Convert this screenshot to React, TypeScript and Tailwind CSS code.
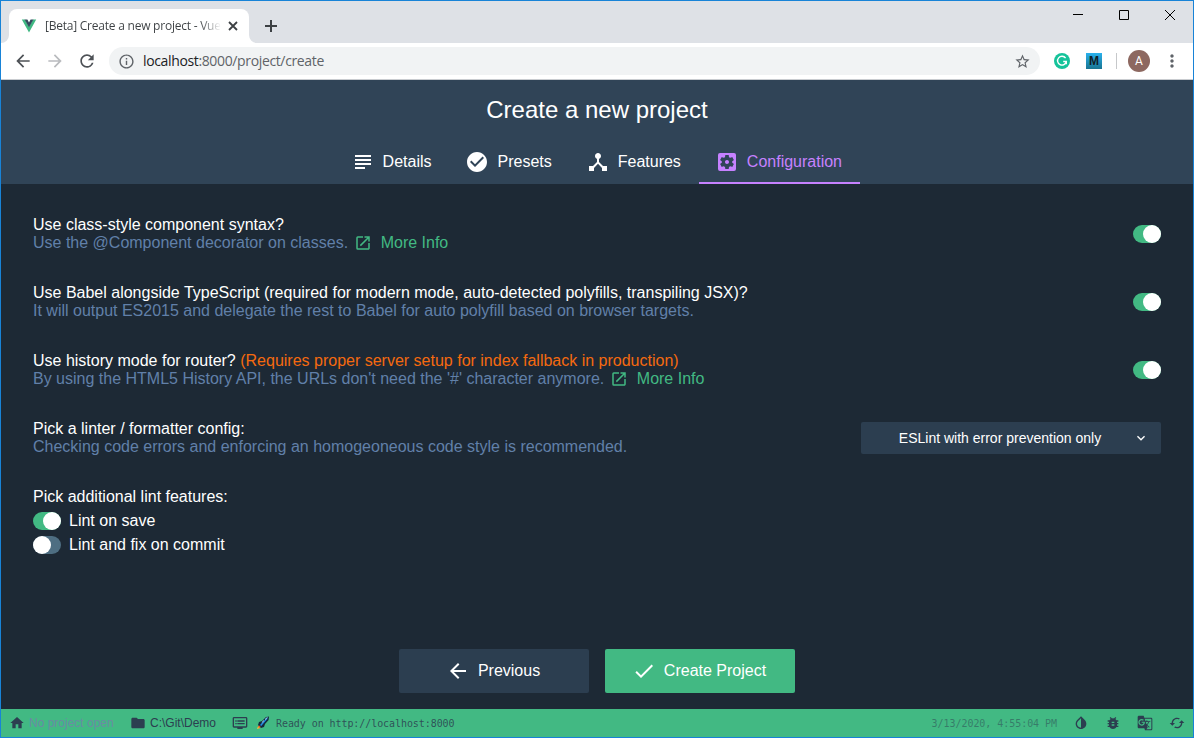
import type { ReactNode } from "react";
import {
  MdArrowBack,
  MdArrowForward,
  MdBugReport,
  MdCached,
  MdCheckCircle,
  MdDeviceHub,
  MdDone,
  MdDvr,
  MdFolder,
  MdGTranslate,
  MdHome,
  MdInfoOutline,
  MdInvertColors,
  MdKeyboardArrowDown,
  MdMoreVert,
  MdOpenInNew,
  MdRefresh,
  MdSettingsApplications,
  MdStarBorder,
  MdSubject,
} from "react-icons/md";

function VueLogo() {
  return (
    <svg className="h-4 w-4 shrink-0" viewBox="0 0 16 16">
      <path d="M0.8 1.6H4l4 6.9 4-6.9h3.2L8 14.4z" fill="#41b883" />
      <path d="M3.6 1.6h2.8L8 4.4l1.6-2.8h2.8L8 9.3z" fill="#35495e" />
    </svg>
  );
}

function TabStrip() {
  return (
    <div className="flex h-[42px] items-end bg-[#dee1e6] pl-[8px]">
      <div className="relative flex h-[34px] w-[240px] items-center rounded-t-[8px] bg-white pl-[12px]">
        <svg className="absolute -left-[8px] bottom-0 h-2 w-2" viewBox="0 0 8 8">
          <path d="M8 0v8H0a8 8 0 0 0 8-8z" fill="#fff" />
        </svg>
        <svg className="absolute -right-[8px] bottom-0 h-2 w-2" viewBox="0 0 8 8">
          <path d="M0 0v8h8a8 8 0 0 1-8-8z" fill="#fff" />
        </svg>
        <VueLogo />
        <div className="ml-[8px] w-[176px] whitespace-nowrap bg-linear-to-r from-[#3c4043] from-88% to-transparent bg-clip-text font-['Open_Sans',sans-serif] text-[12px] tracking-[-0.23px] text-transparent">
          [Beta] Create a new project - Vue
        </div>
        <svg className="ml-[7px] h-[10px] w-[10px]" viewBox="0 0 10 10" stroke="#3c4043" strokeWidth="1.8">
          <path d="M1 1l8 8M9 1L1 9" />
        </svg>
      </div>
      <svg className="mb-[11px] ml-[16px] h-[12px] w-[12px]" viewBox="0 0 12 12" stroke="#3c4043" strokeWidth="2">
        <path d="M6 0v12M0 6h12" />
      </svg>
      <div className="mb-[23px] ml-auto mr-[18px] flex items-center gap-[36px]">
        <svg className="h-[11px] w-[10px]" viewBox="0 0 10 11" stroke="#000">
          <path d="M0 5.5h10" />
        </svg>
        <svg className="h-[10px] w-[10px]" viewBox="0 0 10 10" stroke="#000" fill="none">
          <path d="M.5.5h9v9h-9z" />
        </svg>
        <svg className="h-[10px] w-[10px]" viewBox="0 0 10 10" stroke="#000">
          <path d="M0 0l10 10M10 0L0 10" />
        </svg>
      </div>
    </div>
  );
}

function Toolbar() {
  return (
    <div className="flex h-[37px] items-center border-b border-[#c9ccd0] bg-white pl-[12px] text-[#5f6368]">
      <MdArrowBack className="h-5 w-5 text-[#4d5156]" />
      <MdArrowForward className="ml-[12px] h-5 w-5 text-[#b9bbbe]" />
      <MdRefresh className="ml-[12px] h-5 w-5 text-[#4d5156]" />
      <div className="ml-[12px] flex h-[28px] w-[931px] items-center rounded-full bg-[#f1f3f4] pl-[9px] pr-[9px]">
        <MdInfoOutline className="h-[17px] w-[17px]" />
        <div className="ml-[8px] whitespace-nowrap font-['Open_Sans',sans-serif] text-[14px] tracking-[-0.36px]">
          <span className="text-[#202124]">localhost</span>:8000/project/create
        </div>
        <MdStarBorder className="ml-auto h-[17px] w-[17px]" />
      </div>
      <svg className="ml-[14px] h-4 w-4" viewBox="0 0 16 16" fill="none">
        <circle cx="8" cy="8" r="8" fill="#15c39a" />
        <path d="M11.6 5.2A4.4 4.4 0 1 0 12.3 8.5H9.2M12.3 8.5v2.7" stroke="#fff" strokeWidth="1.4" />
      </svg>
      <div className="ml-[16px] flex h-4 w-4 items-center justify-center bg-linear-to-b from-[#29b1ed] to-[#197593] font-['Liberation_Sans',sans-serif] text-[12px] font-bold leading-4 text-[#102027]">
        M
      </div>
      <div className="ml-[14px] h-4 w-px bg-[#c6c8ca]" />
      <div className="ml-[11px] flex h-[22px] w-[22px] items-center justify-center rounded-full bg-[#8d6860] font-['Roboto',sans-serif] text-[12px] text-white">
        A
      </div>
      <MdMoreVert className="ml-[12px] h-5 w-5" />
    </div>
  );
}

function StepTab({ icon, label, active = false }: { icon: ReactNode; label: string; active?: boolean }) {
  return (
    <div
      className={
        active
          ? "flex h-[46px] items-center gap-2 border-b-2 border-[#c681ff] pl-[16.3px] pr-[17.7px] pt-[4px] text-[#c681ff]"
          : "flex h-[46px] items-center gap-2 border-b-2 border-transparent pl-[16.3px] pr-[17.7px] pt-[4px] text-white"
      }
    >
      {icon}
      <span>{label}</span>
    </div>
  );
}

function Toggle({ on }: { on: boolean }) {
  return (
    <div
      className={
        on
          ? "flex h-[18px] w-[28px] shrink-0 justify-end rounded-full bg-[#42b983]"
          : "flex h-[18px] w-[28px] shrink-0 justify-start rounded-full bg-[#4e6e82]"
      }
    >
      <div className="h-[18px] w-[18px] rounded-full bg-white" />
    </div>
  );
}

function MoreInfo() {
  return (
    <a className="ml-[6px] inline-flex items-center gap-[8.6px] text-[#42b983]">
      <MdOpenInNew className="-mt-px h-[18px] w-[18px]" />
      More Info
    </a>
  );
}

function Setting({ title, note, children, control }: { title: string; note?: string; children: ReactNode; control: ReactNode }) {
  return (
    <div className="flex h-[68px] items-center justify-between px-8">
      <div className="whitespace-nowrap">
        <div className="h-[18px] text-white">
          {title}
          {note && <span className="text-[#f5690f]"> {note}</span>}
        </div>
        <div className="flex h-[18px] items-center text-[#6180a9]">{children}</div>
      </div>
      {control}
    </div>
  );
}

function StatusBar() {
  return (
    <div className="flex h-[28px] items-center bg-[#42b983] pl-[8px] pr-[8px] text-[12px] text-[#2c3e50]">
      <MdHome className="h-4 w-4" />
      <span className="ml-[4px] w-[86px] whitespace-nowrap text-[#6b8ba4]">No project open</span>
      <MdFolder className="ml-[15px] h-4 w-4" />
      <span className="ml-[4px] w-[66px] whitespace-nowrap">C:\Git\Demo</span>
      <MdDvr className="ml-[16px] h-4 w-4" />
      <svg className="ml-[8px] h-[14px] w-[14px]" viewBox="0 0 14 14">
        <path d="M2 9l1-3 3-1 4-4 3-.6L12.6 4 9 8l-1 3-3 1z" fill="#14283c" />
        <path d="M4 9l6.5-7 1.2-.4-.4 1.3L5.2 10z" fill="#258ce6" />
        <path d="M9 3.5l2.5-2.2M5.8 6.6L8 4.5" stroke="#a5dcf5" />
        <path d="M1 13l1.2-3.3L4.4 12z" fill="#ffc832" />
        <path d="M2 10.8l1.3-1.4 1.3 1.4L3.2 12z" fill="#e8562a" />
      </svg>
      <span className="ml-[6px] mt-px whitespace-nowrap font-['DejaVu_Sans_Mono',monospace] text-[10px] tracking-[-0.07px] text-[#2c3e50]/85">
        Ready on http://localhost:8000
      </span>
      <span className="ml-auto mt-px whitespace-nowrap font-['DejaVu_Sans_Mono',monospace] text-[10px] tracking-[-0.05px] text-[#2c3e50]/50">
        3/13/2020, 4:55:04 PM
      </span>
      <div className="ml-[16px] flex gap-4">
        <MdInvertColors className="h-4 w-4" />
        <MdBugReport className="h-4 w-4" />
        <MdGTranslate className="h-4 w-4" />
        <MdCached className="h-4 w-4" />
      </div>
    </div>
  );
}

export default function App() {
  return (
    <div className="flex h-[738px] w-[1194px] flex-col overflow-hidden border border-[#1883d7] bg-[#1d2935] font-['Liberation_Sans',Arial,sans-serif] text-[16px] leading-[18px]">
      <TabStrip />
      <Toolbar />
      <header className="flex h-[104px] flex-col items-center bg-[#304457]">
        <h1 className="mt-[16px] h-[42px] text-[24px] leading-[28px] text-white">Create a new project</h1>
        <nav className="flex">
          <StepTab icon={<MdSubject className="h-6 w-6" />} label="Details" />
          <StepTab icon={<MdCheckCircle className="h-6 w-6" />} label="Presets" />
          <StepTab icon={<MdDeviceHub className="h-6 w-6" />} label="Features" />
          <StepTab icon={<MdSettingsApplications className="h-6 w-6" />} label="Configuration" active />
        </nav>
      </header>
      <main className="flex flex-1 flex-col pt-[16px]">
        <Setting title="Use class-style component syntax?" control={<Toggle on />}>
          Use the @Component decorator on classes.
          <MoreInfo />
        </Setting>
        <Setting
          title="Use Babel alongside TypeScript (required for modern mode, auto-detected polyfills, transpiling JSX)?"
          control={<Toggle on />}
        >
          It will output ES2015 and delegate the rest to Babel for auto polyfill based on browser targets.
        </Setting>
        <Setting
          title="Use history mode for router?"
          note="(Requires proper server setup for index fallback in production)"
          control={<Toggle on />}
        >
          By using the HTML5 History API, the URLs don't need the '#' character anymore.
          <MoreInfo />
        </Setting>
        <Setting
          title="Pick a linter / formatter config:"
          control={
            <div className="flex h-8 w-[300px] items-center rounded-[2px] bg-[#2c3e50] pr-[12px] text-[14px] text-white">
              <span className="flex-1 pl-[6px] text-center">ESLint with error prevention only</span>
              <MdKeyboardArrowDown className="h-4 w-4" />
            </div>
          }
        >
          Checking code errors and enforcing an homogeoneous code style is recommended.
        </Setting>
        <div className="px-8 pt-[16px] text-white">
          <div className="h-[21px]">Pick additional lint features:</div>
          <div className="flex h-6 items-center gap-2">
            <Toggle on />
            <span>Lint on save</span>
          </div>
          <div className="flex h-6 items-center gap-2">
            <Toggle on={false} />
            <span>Lint and fix on commit</span>
          </div>
        </div>
        <div className="mb-[16px] mt-auto flex justify-center gap-4 text-white">
          <button className="flex h-[44px] w-[190px] items-center justify-center gap-2 rounded-[2px] bg-[#2c3e50] pr-[2px]">
            <MdArrowBack className="h-6 w-6" />
            Previous
          </button>
          <button className="flex h-[44px] w-[190px] items-center justify-center gap-2 rounded-[2px] bg-[#42b983] pr-[2px]">
            <MdDone className="h-6 w-6" />
            Create Project
          </button>
        </div>
      </main>
      <StatusBar />
    </div>
  );
}
